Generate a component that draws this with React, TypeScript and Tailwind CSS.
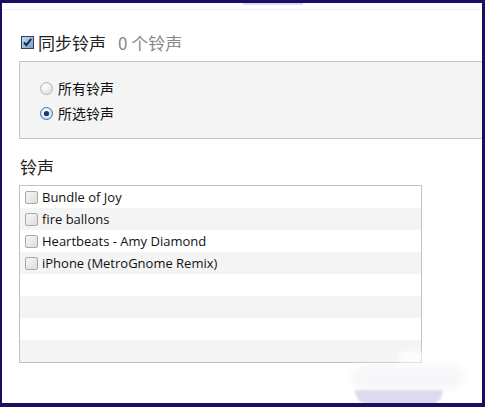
import React from 'react';

const ringtones = [
  'Bundle of Joy',
  'fire ballons',
  'Heartbeats - Amy Diamond',
  'iPhone (MetroGnome Remix)',
  '',
  '',
  '',
  '',
];

const cjk = "font-['Microsoft_YaHei','Noto_Sans_CJK_SC',sans-serif]";

const CheckedBox: React.FC = () => (
  <svg width="13" height="13" viewBox="0 0 13 13" className="shrink-0">
    <defs>
      <linearGradient id="cb" x1="0" y1="0" x2="1" y2="1">
        <stop offset="0" stopColor="#c9dbf2" />
        <stop offset="1" stopColor="#7a9cc8" />
      </linearGradient>
    </defs>
    <rect x="0.5" y="0.5" width="12" height="12" fill="url(#cb)" stroke="#2f3f5c" />
    <path d="M3 6.5 L5.4 9.2 L10.2 2.8" fill="none" stroke="#1b2a45" strokeWidth="2" />
  </svg>
);

const Radio: React.FC<{ on?: boolean }> = ({ on }) => (
  <svg width="13" height="13" viewBox="0 0 13 13" className="shrink-0">
    <defs>
      <radialGradient id={on ? 'ron' : 'roff'} cx="0.4" cy="0.35" r="0.7">
        <stop offset="0" stopColor="#ffffff" />
        <stop offset="1" stopColor={on ? '#c7d8ee' : '#dedede'} />
      </radialGradient>
    </defs>
    <circle cx="6.5" cy="6.5" r="6" fill={`url(#${on ? 'ron' : 'roff'})`} stroke={on ? '#3c70a8' : '#b4b4b4'} />
    {on && <circle cx="6.5" cy="6.5" r="2.6" fill="#1c3a68" />}
  </svg>
);

const App: React.FC = () => {
  return (
    <div className="w-[485px] h-[407px] bg-[#1f0b62] pt-[3px] pl-[2px] pr-[3px] pb-[4px]">
      <div className="relative h-full bg-white overflow-hidden">
        {/* top strip */}
        <div className="absolute left-[241px] top-0 w-[60px] h-[2px] bg-[#dcdcf7]" />
        <div className="mt-[6px] ml-[1px] mr-[2px] h-px bg-[#eef0f6]" />

        <div className="pl-[17px]">
          {/* sync ringtones */}
          <div className="mt-[20px] h-[24px] flex items-center gap-[4px] pl-[2px]">
            <CheckedBox />
            <span className={`${cjk} text-[17px] text-[#222] leading-none`}>同步铃声</span>
            <span className={`${cjk} text-[17px] text-[#888] leading-none ml-[8px]`}>0 个铃声</span>
          </div>

          <div className="mt-[7px] h-[78px] border border-r-0 border-[#c4c4c4] bg-[#f4f4f4] pt-[14px] pl-[20px]">
            <div className="h-[24px] flex items-center gap-[5px]">
              <Radio />
              <span className={`${cjk} text-[14px] text-[#111] leading-none`}>所有铃声</span>
            </div>
            <div className="mt-px h-[24px] flex items-center gap-[5px]">
              <Radio on />
              <span className={`${cjk} text-[14px] text-[#111] leading-none`}>所选铃声</span>
            </div>
          </div>

          <div className={`mt-[15px] h-[24px] flex items-center pl-px ${cjk} text-[17px] text-[#222] leading-none`}>铃声</div>

          <div className="mt-[7px] w-[403px] border border-[#c2c2c2]">
            {ringtones.map((name, i) => (
              <div
                key={i}
                className={`h-[22px] flex items-center gap-[4px] pl-[5px] ${i % 2 === 1 ? 'bg-[#f4f4f4]' : 'bg-white'}`}
              >
                {name && (
                  <>
                    <span className="w-[13px] h-[13px] shrink-0 rounded-[2px] border border-[#a9a9a9] bg-gradient-to-br from-[#f7f7f7] to-[#dddddd]" />
                    <span className="font-['Open_Sans',sans-serif] text-[13px] text-[#111] leading-none">{name}</span>
                  </>
                )}
              </div>
            ))}
          </div>
        </div>

        {/* watermark */}
        <div className="absolute left-[396px] top-[348px] w-[26px] h-[12px] rounded-full bg-white/80 blur-[2px]" />
        <div className="absolute left-[350px] top-[362px] w-[112px] h-[24px] rounded-full bg-[#f7f7fa] blur-[3px]" />
        <div className="absolute left-[353px] top-[387px] w-[88px] h-[16px] rounded-b-full bg-[#dcdaee] blur-[1px]" />
      </div>
    </div>
  );
};

export default App;
